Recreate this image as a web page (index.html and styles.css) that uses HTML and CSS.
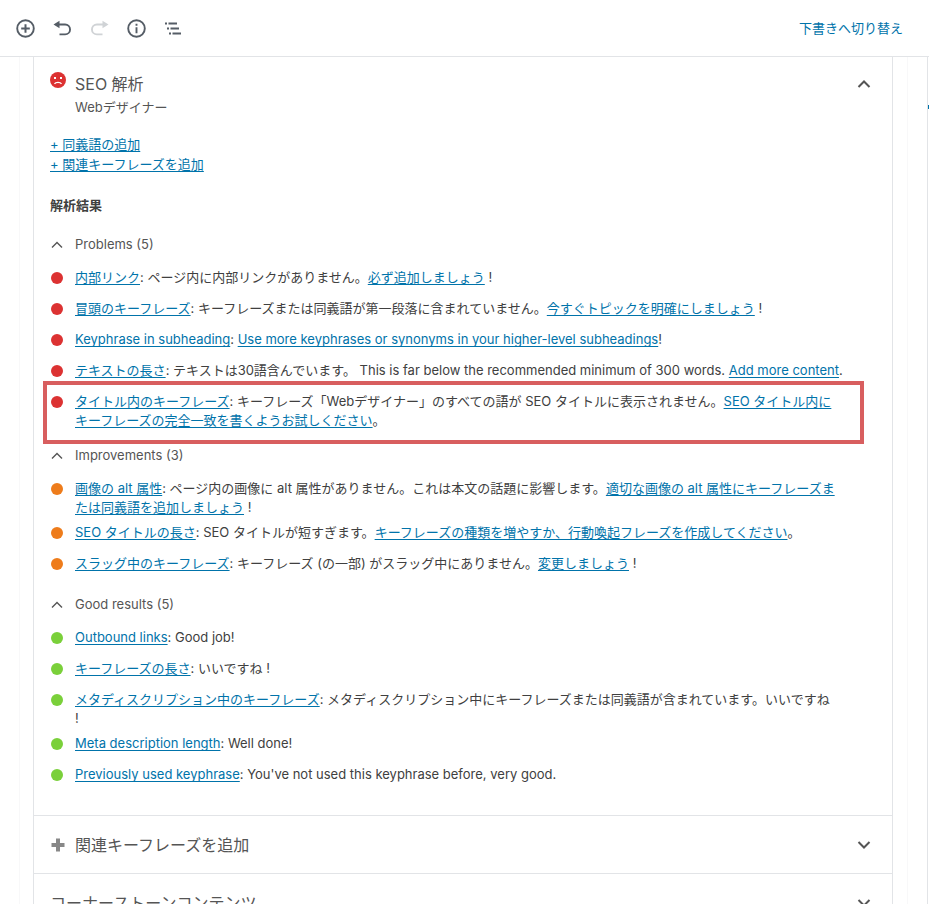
FILE: index.html
```html
<!DOCTYPE html>
<html lang="ja">
<head>
<meta charset="utf-8">
<meta name="viewport" content="width=device-width, initial-scale=1">
<title>SEO 解析</title>
<link rel="stylesheet" href="styles.css">
</head>
<body>
<header class="toolbar">
  <div class="tools">
    <button type="button" class="tool" aria-label="ブロックの追加">
      <svg viewBox="0 0 20 20"><circle cx="10.500" cy="10.500" r="8.300" fill="none" stroke="currentColor" stroke-width="1.900"/><path d="M10.500 6.200v8.600M6.200 10.500h8.600" stroke="currentColor" stroke-width="2"/></svg>
    </button>
    <button type="button" class="tool" aria-label="元に戻す">
      <svg viewBox="0 0 20 20"><path d="M1.500 6.500 7.500 2.800v7.400z" fill="currentColor"/><path d="M6.500 6.500h6.600a4.700 4.700 0 0 1 0 9.900H7.500" fill="none" stroke="currentColor" stroke-width="1.900"/></svg>
    </button>
    <button type="button" class="tool" aria-label="やり直す" disabled>
      <svg viewBox="0 0 20 20"><path d="M19.500 6.500 13.500 2.800v7.400z" fill="currentColor"/><path d="M14.500 6.500H7.900a4.700 4.700 0 0 0 0 9.900H13.500" fill="none" stroke="currentColor" stroke-width="1.900"/></svg>
    </button>
    <button type="button" class="tool" aria-label="情報">
      <svg viewBox="0 0 20 20"><circle cx="10.500" cy="10.500" r="8.300" fill="none" stroke="currentColor" stroke-width="1.900"/><path d="M10.500 9.300v6M10.500 5.700v2" stroke="currentColor" stroke-width="1.900"/></svg>
    </button>
    <button type="button" class="tool" aria-label="ブロックナビゲーション">
      <svg viewBox="0 0 20 20"><path d="M2 5.500h2M5.500 5.500H14M4 10.500h2M7.500 10.500H16M6 15.500h2M9.500 15.500H18" stroke="currentColor" stroke-width="1.900" fill="none"/></svg>
    </button>
  </div>
  <button type="button" class="draft">下書きへ切り替え</button>
</header>

<div class="workspace">
  <main class="editor">
    <div class="metabox">
      <section class="panel">
        <button type="button" class="panel-head" aria-expanded="true">
          <svg class="face" viewBox="0 0 16 16"><circle cx="8" cy="8" r="8" fill="#dc3232"/><rect x="4" y="5" width="2" height="2" fill="#fff"/><rect x="10" y="5" width="2" height="2" fill="#fff"/><path d="M4.500 11.800c1.200-2 5.800-2 7 0" fill="none" stroke="#fff" stroke-width="1.300"/></svg>
          <span class="titles"><span class="title">SEO 解析</span><span class="subtitle">Webデザイナー</span></span>
          <svg class="chevron" viewBox="0 0 14 14"><path d="M1.500 10 7 4.500 12.500 10" fill="none" stroke="currentColor" stroke-width="2"/></svg>
        </button>

        <div class="panel-body">
          <div class="extras">
            <a href="#synonyms">+ 同義語の追加</a>
            <a href="#related">+ 関連キーフレーズを追加</a>
          </div>
          <h2 class="results-title">解析結果</h2>

          <button type="button" class="group-head" aria-expanded="true">
            <svg viewBox="0 0 14 14"><path d="M2 9.500 7 4.500 12 9.500" fill="none" stroke="currentColor" stroke-width="1.400"/></svg>
            <span>Problems (5)</span>
          </button>
          <ul class="results bad">
            <li><p><a href="#r1">内部リンク</a>: ページ内に内部リンクがありません。<a href="#r1b">必ず追加しましょう</a> !</p></li>
            <li><p><a href="#r2">冒頭のキーフレーズ</a>: キーフレーズまたは同義語が第一段落に含まれていません。<a href="#r2b">今すぐトピックを明確にしましょう</a> !</p></li>
            <li><p><a href="#r3">Keyphrase in subheading</a>: <a href="#r3b">Use more keyphrases or synonyms in your higher-level subheadings</a>!</p></li>
            <li><p><a href="#r4">テキストの長さ</a>: テキストは30語含んでいます。 This is far below the recommended minimum of 300 words. <a href="#r4b">Add more content</a>.</p></li>
            <li class="highlight"><p><a href="#r5">タイトル内のキーフレーズ</a>: キーフレーズ「Webデザイナー」のすべての語が SEO タイトルに表示されません。<a href="#r5b">SEO タイトル内に<br>キーフレーズの完全一致を書くようお試しください</a>。</p></li>
          </ul>

          <button type="button" class="group-head" aria-expanded="true">
            <svg viewBox="0 0 14 14"><path d="M2 9.500 7 4.500 12 9.500" fill="none" stroke="currentColor" stroke-width="1.400"/></svg>
            <span>Improvements (3)</span>
          </button>
          <ul class="results ok">
            <li><p><a href="#r6">画像の alt 属性</a>: ページ内の画像に alt 属性がありません。これは本文の話題に影響します。<a href="#r6b">適切な画像の alt 属性にキーフレーズま<br>たは同義語を追加しましょう</a> !</p></li>
            <li><p><a href="#r7">SEO タイトルの長さ</a>: SEO タイトルが短すぎます。<a href="#r7b">キーフレーズの種類を増やすか、行動喚起フレーズを作成してください</a>。</p></li>
            <li><p><a href="#r8">スラッグ中のキーフレーズ</a>: キーフレーズ (の一部) がスラッグ中にありません。<a href="#r8b">変更しましょう</a> !</p></li>
          </ul>

          <button type="button" class="group-head" aria-expanded="true">
            <svg viewBox="0 0 14 14"><path d="M2 9.500 7 4.500 12 9.500" fill="none" stroke="currentColor" stroke-width="1.400"/></svg>
            <span>Good results (5)</span>
          </button>
          <ul class="results good">
            <li><p><a href="#r9">Outbound links</a>: Good job!</p></li>
            <li><p><a href="#r10">キーフレーズの長さ</a>: いいですね !</p></li>
            <li><p><a href="#r11">メタディスクリプション中のキーフレーズ</a>: メタディスクリプション中にキーフレーズまたは同義語が含まれています。いいですね<br>!</p></li>
            <li><p><a href="#r12">Meta description length</a>: Well done!</p></li>
            <li><p><a href="#r13">Previously used keyphrase</a>: You've not used this keyphrase before, very good.</p></li>
          </ul>
        </div>
      </section>

      <section class="panel">
        <button type="button" class="panel-head closed" aria-expanded="false">
          <svg class="plus" viewBox="0 0 16 16"><path d="M8 1.500v13M1.500 8h13" stroke="currentColor" stroke-width="4"/></svg>
          <span class="title">関連キーフレーズを追加</span>
          <svg class="chevron" viewBox="0 0 14 14"><path d="M1.500 4 7 9.500 12.500 4" fill="none" stroke="currentColor" stroke-width="2"/></svg>
        </button>
      </section>
      <section class="panel">
        <button type="button" class="panel-head closed" aria-expanded="false">
          <span class="title">コーナーストーンコンテンツ</span>
          <svg class="chevron" viewBox="0 0 14 14"><path d="M1.500 4 7 9.500 12.500 4" fill="none" stroke="currentColor" stroke-width="2"/></svg>
        </button>
      </section>
    </div>
  </main>
  <aside class="sidebar"></aside>
</div>
</body>
</html>
```
FILE: styles.css
```css
* { box-sizing: border-box; }

body {
  margin: 0;
  height: 100vh;
  display: flex;
  flex-direction: column;
  overflow: hidden;
  background: #fff;
  color: #404040;
  font: 13px/19px Inter, "Noto Sans CJK JP", sans-serif;
}

button {
  margin: 0;
  padding: 0;
  border: 0;
  background: none;
  color: inherit;
  font: inherit;
  text-align: left;
}

svg { display: block; flex: none; }

a {
  color: #0073aa;
  text-decoration: underline;
  text-underline-offset: 2px;
  text-decoration-skip-ink: none;
}

.toolbar {
  flex: none;
  display: flex;
  align-items: center;
  justify-content: space-between;
  height: 57px;
  padding: 0 26px 0 15px;
  border-bottom: 1px solid #e2e4e7;
}

.tools { display: flex; gap: 17px; }
.tool { color: #555d66; }
.tool:disabled { color: #d0d3d6; }
.tool svg { width: 20px; height: 20px; }
.draft { color: #0073aa; }

.workspace {
  flex: 1;
  min-height: 0;
  display: flex;
}

.editor {
  flex: 1;
  min-width: 0;
  margin: 0 19px;
  padding: 0 14px 0 13px;
  border: solid #f8f8f9;
  border-width: 0 1px;
  overflow: hidden;
}

.metabox {
  border: solid #e2e4e7;
  border-width: 0 1px;
}

.sidebar {
  flex: none;
  width: 2px;
  border-left: 1px solid #e2e4e7;
  background: linear-gradient(#0073aa, #0073aa) 0 48px / 1px 4px no-repeat;
}

.panel { border-bottom: 1px solid #e2e4e7; }

.panel-head {
  display: flex;
  width: 100%;
  padding: 15px 21px 0 16px;
  color: #555;
}

.panel-head.closed {
  align-items: center;
  height: 57px;
  padding-top: 0;
}

.titles { flex: 1; }
.title,
.subtitle { display: block; }
.title { flex: 1; font-size: 16px; line-height: 24px; }
.subtitle { margin-top: 2px; }
.face { width: 16px; height: 16px; margin-right: 9px; }
.plus { width: 16px; height: 16px; margin-right: 9px; color: #888; }
.chevron { width: 14px; height: 14px; }
.titles + .chevron { margin-top: 5px; }

.panel-body { padding: 18px 16px 9px; }

.extras {
  display: flex;
  flex-direction: column;
  align-items: flex-start;
  gap: 1px;
}

.results-title {
  margin: 22px 0 20px;
  font-size: 13px;
  line-height: 19px;
}

.group-head {
  display: flex;
  align-items: center;
  gap: 11px;
  color: #555;
}

.group-head svg { width: 14px; height: 14px; }

.results {
  display: grid;
  gap: 6px;
  margin: 14px 0 16px;
  padding: 0;
  list-style: none;
}

.results li {
  position: relative;
  display: flex;
  gap: 12px;
  min-height: 25px;
}

.results li::before {
  content: "";
  flex: none;
  width: 12px;
  height: 12px;
  margin: 4px 0 0 1px;
  border-radius: 50%;
}

.bad li::before { background: #dc3232; }
.ok li::before { background: #ee7c1b; }
.good li::before { background: #7ad03a; }

.results p { flex: 1; margin: 0; }

.results .highlight::after {
  content: "";
  position: absolute;
  inset: -11px 12px -14px -7px;
  border: 4px solid #d85e5f;
}
```
